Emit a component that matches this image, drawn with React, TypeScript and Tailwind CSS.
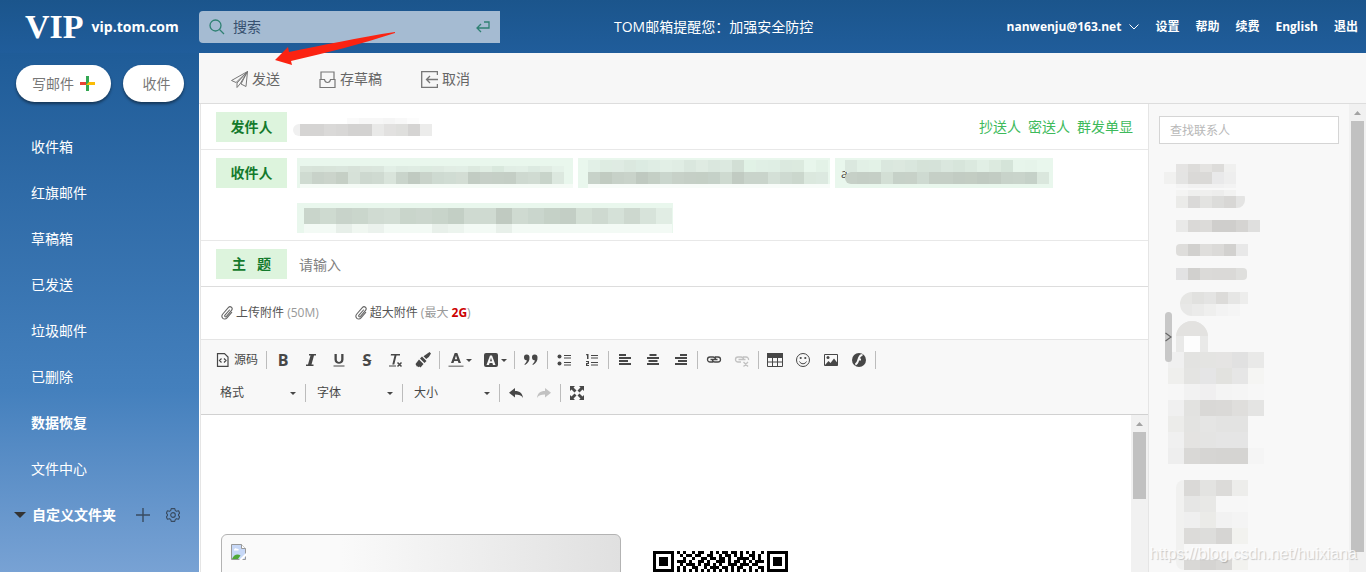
import type { ReactNode } from "react"
import clsx from "clsx"

const folders = [
  { name: "收件箱", bold: false },
  { name: "红旗邮件", bold: false },
  { name: "草稿箱", bold: false },
  { name: "已发送", bold: false },
  { name: "垃圾邮件", bold: false },
  { name: "已删除", bold: false },
  { name: "数据恢复", bold: true },
  { name: "文件中心", bold: false },
]

const accountLinks = ["设置", "帮助", "续费", "English", "退出"]

interface StripProps {
  cells: string;
  className?: string;
  cell?: string;
}

// A row of flat colour cells, "-" leaves a cell empty
function Strip({ cells, className, cell = "w-3" }: StripProps) {
  return (
    <div className={clsx("flex", className)}>
      {cells.split(" ").map((c, i) => (
        <span key={i} className={clsx("h-full shrink-0", cell)} style={{ backgroundColor: c === "-" ? "transparent" : `#${c}` }} />
      ))}
    </div>
  )
}

function Header() {
  return (
    <header className="flex h-[53px] shrink-0 items-center bg-linear-to-b from-[#1b558c] to-[#205d9b] text-white">
      <a href="#" className="flex w-[199px] shrink-0 items-center gap-2 pl-[25px]">
        <span className="font-['Liberation_Serif',serif] text-[34px] leading-[52px] font-bold">VIP</span>
        <span className="text-sm leading-5 font-bold">vip.tom.com</span>
      </a>
      <label className="flex h-8 w-[301px] shrink-0 items-center rounded-l-[4px] bg-[#a5bbd2] px-[10px]">
        <svg className="h-4 w-4 shrink-0" viewBox="0 0 16 16" fill="none" stroke="#2f8173" strokeWidth="1.3">
          <circle cx="6.5" cy="6.5" r="5.5" />
          <path d="M10.5 10.5 15 15" />
        </svg>
        <input
          aria-label="搜索"
          placeholder="搜索"
          className="ml-2 min-w-0 flex-1 bg-transparent text-sm leading-5 outline-none placeholder:text-[#37506f]"
        />
        <svg className="h-3 w-[14px] shrink-0" viewBox="0 0 14 12" fill="none" stroke="#2f8173" strokeWidth="1.3">
          <path d="M8 1h5v6H1M5 3 1 7l4 4" />
        </svg>
      </label>
      <p className="flex-1 pl-[114px] text-sm leading-5 whitespace-nowrap">TOM邮箱提醒您：加强安全防控</p>
      <nav className="flex items-center gap-4 pr-2 text-xs leading-5 font-bold whitespace-nowrap">
        <button className="flex items-center gap-2">
          nanwenju@163.net
          <svg className="h-[6px] w-[10px]" viewBox="0 0 10 6" fill="none" stroke="white">
            <path d="m.5.5 4.500 4.500L9.500.5" />
          </svg>
        </button>
        {accountLinks.map((name) => (
          <a key={name} href="#">{name}</a>
        ))}
      </nav>
    </header>
  )
}

function Sidebar() {
  return (
    <aside className="w-[199px] shrink-0 bg-linear-to-b from-[#1f5c98] from-0% via-[#4480bd] via-65% to-[#78a2d4] text-sm leading-5 text-white">
      <div className="flex gap-3 pt-3 pl-4 text-[#777]">
        <button className="flex h-[37px] w-[95px] items-center gap-[6px] rounded-full bg-white pl-4 shadow-[0_2px_3px_rgba(0,0,0,0.45)]">
          写邮件
          <svg className="h-[15px] w-[15px]" viewBox="0 0 15 15">
            <path d="M6 0h3v15H6z" fill="#34a853" />
            <path d="M0 6h6v3H0z" fill="#ea4335" />
            <path d="M6 9 9 6h6v3z" fill="#fbbc05" />
          </svg>
        </button>
        <button className="h-[37px] w-[61px] rounded-full bg-white pl-[6px] shadow-[0_2px_3px_rgba(0,0,0,0.45)]">收件</button>
      </div>
      <ul className="mt-[22px]">
        {folders.map((f) => (
          <li key={f.name}>
            <a href="#" className={clsx("flex h-[46px] items-center pl-[31px]", f.bold && "font-bold")}>{f.name}</a>
          </li>
        ))}
      </ul>
      <div className="flex h-[46px] items-center pl-[14px]">
        <button className="flex items-center gap-[6px] font-bold">
          <svg className="h-[6px] w-3" viewBox="0 0 12 6"><path d="M0 0h12L6 6z" fill="#333" /></svg>
          自定义文件夹
        </button>
        <button aria-label="新建文件夹" className="ml-5">
          <svg className="h-[14px] w-[14px]" viewBox="0 0 14 14" stroke="#394b60" strokeWidth="1.400"><path d="M7 0v14M0 7h14" /></svg>
        </button>
        <button aria-label="文件夹设置" className="ml-4">
          <svg className="h-[14px] w-[14px]" viewBox="0 0 24 24" fill="none" stroke="#394b60" strokeWidth="1.900" strokeLinejoin="round">
            <path d="M9 1h6l1 3.500 2 1.200 3.500-.9L23.500 9l-2 2v2l2 2-2 4.200-3.500-.9-2 1.200L15 23H9l-1-3.500-2-1.200-3.500.9L.5 15l2-2v-2l-2-2 2-4.200 3.500.9 2-1.200z" />
            <circle cx="12" cy="12" r="4" />
          </svg>
        </button>
      </div>
    </aside>
  )
}

function ActionBar() {
  return (
    <div className="flex h-[51px] shrink-0 items-center gap-[39px] border-b border-[#ddd] bg-[#f7f7f7] pt-[2px] pl-8 text-sm leading-5 text-[#666]">
      <button className="flex items-center gap-1">
        <svg className="h-[17px] w-[17px]" viewBox="0 0 17 17" fill="none" stroke="#777" strokeLinejoin="round">
          <path d="M16.500.5.5 9.500l4.500 2zM16.500.5 15 15.500l-5-2.500zM16.500.5 6 12v4.500l3-3.500L16.500.5" />
        </svg>
        发送
      </button>
      <button className="flex items-center gap-1">
        <svg className="h-[17px] w-[17px]" viewBox="0 0 17 17" fill="none" stroke="#777" strokeWidth="1.200">
          <path d="M2 8V1h13v7M1 8.500v8h15v-8h-4.500c-.3 2-1.300 3-3 3s-2.700-1-3-3z" />
        </svg>
        存草稿
      </button>
      <button className="flex items-center gap-1">
        <svg className="h-[17px] w-[17px]" viewBox="0 0 17 17" fill="none" stroke="#777" strokeWidth="1.300">
          <path d="M16.400 4V.7H.7v15.700h15.700V13M17 8.500H5.500M9 5 5.500 8.500 9 12" />
        </svg>
        取消
      </button>
    </div>
  )
}

function FieldLabel({ children }: { children: ReactNode }) {
  return (
    <span className="flex h-[30px] w-[71px] shrink-0 items-center justify-center bg-[#ddf4dd] text-sm leading-5 font-bold whitespace-pre text-[#147a2c]">
      {children}
    </span>
  )
}

function Fields() {
  return (
    <div className="shrink-0">
      <div className="flex h-[46px] items-start border-b border-[#e8e8e8] px-[15px] pt-2">
        <FieldLabel>发件人</FieldLabel>
        <div className="ml-[6px] pt-[6px]">
          <Strip className="h-[6px] pl-[54px]" cells="fafafa f7f7f7 f7f7f7 f5f5f5 f8f8f8 fcfcfc" />
          <div className="flex">
            <span className="h-3 w-[7px] rounded-l-full bg-[#f0f0f0]" />
            <Strip className="h-3" cells="d5d4d3 d5d4d3 dad9d8 d8d7d6 d3d2d1 d3d2d1 e9e9e8 e2e1e0 dfdfdd d5d4d3 ececeb" />
          </div>
        </div>
        <div className="ml-auto flex gap-[7px] pt-[5px] text-sm leading-5 text-[#3dba5b]">
          <button>抄送人</button>
          <button>密送人</button>
          <button>群发单显</button>
        </div>
      </div>

      <div className="flex min-h-[91px] items-start border-b border-[#e8e8e8] px-[15px] pt-2 pb-[7px]">
        <FieldLabel>收件人</FieldLabel>
        <div className="ml-[10px] flex flex-wrap gap-x-[5px] gap-y-[15px]">
          <div className="h-[30px] w-[276px] overflow-hidden bg-[#e9f7ed] pt-2 pl-[3px]">
            <Strip className="h-[6px]" cells="d8e4da d7e3d9 d8e4da d9e5dc d7e2d9 dae5dc dae6dd e2efe6 deebe2 dfece3 dcebe0 deeae1 e1ede4 e1eee5 dce9df e0ede3 d9e8dd e1eee5 e2efe6 dceae1 e0ece3 e5f2e9" />
            <Strip className="h-3" cells="cfdbd1 c8d2c9 cbd4cb c5cfc5 d6e1d8 cdd8cf cfdad1 d9e4db c9d4cb c0cac1 c9d3ca cedad1 d0dcd3 d3ddd4 c2ccc3 c6cfc7 c5cfc6 c4cec5 ced9d0 d0dbd2 c8d4ca dce8df" />
            <div className="h-1 bg-[#f5fbf6]" />
          </div>
          <div className="h-[30px] w-[252px] overflow-hidden bg-[#e9f7ed] pt-[2px] pl-[10px]">
            <Strip className="h-3" cells="e2f0e7 deece2 dfebe3 dbe8df dcebe2 dfede4 e2efe6 e0ede4 dae7de dfebe2 dae7de dce9e0 d2dfd5 e1f2e6 e0efe5 dfeee4 dbe9df dceadf e8f6ec e3f2e7" />
            <Strip className="h-3" cells="c7d2c9 c1cbc1 c7d1c8 c9d3ca bfc9c0 c4cfc5 cad6cd c7d1c8 c5cfc6 c4cfc5 c5d1c8 cedad0 c1cbc2 c9d4cb c9d4cb d4e0d7 cedad1 cbd7cd dbe8de dce9e0" />
            <div className="h-1 bg-[#f8fcf9]" />
          </div>
          <div className="flex h-[30px] w-[218px] overflow-hidden bg-[#e9f7ed] pt-[2px]">
            <span className="mt-[6px] w-[10px] pl-[6px] text-xs leading-4 text-[#444]">a</span>
            <div>
              <Strip className="h-3" cells="dbe8df e2f0e6 e3f2e7 dae7de dce8df d9e6dd d5e2d8 d5e2d9 dae7de d7e5db dbe9df e1efe5 dceadf d5e4d9 e7f5eb e6f4ea" />
              <Strip className="h-3 overflow-hidden rounded-l-md" cells="c6d0c7 c4cec5 c5cfc6 d3dfd5 c6d1c8 c7d1c8 cedad1 c5cfc6 c5cfc6 c2ccc3 c3cdc3 c0cac1 c2ccc3 c8d3ca c9d4cb c5d1c8 dae7dd" />
            </div>
          </div>
          <div className="h-[30px] w-[376px] overflow-hidden bg-[#e9f7ed] pt-[5px] pl-[7px]">
            <Strip className="h-4" cell="w-4" cells="c9d5cb cedad0 c8d3ca cad6cc d0dbd2 d2ddd4 c9d5cb cbd6cd c8d4ca c3cfc5 cfdad1 cfdad1 c0cac1 cfdad1 cad6cd c5d1c7 c3cec5 d3dfd5 ced9d0 d5e1d8 cdd8cf d7e3da e1ede4" />
            <Strip className="h-4" cell="w-4" cells="f3faf5 f3faf5 e7efe9 f0f7f1 ebf2ed f3faf5 f3faf5 f3faf5 e8f0ea ecf4ee f3faf5 f3faf5 e8f0ea f3faf5 f3faf5 f3faf5 f3faf5 f3faf5 f3faf5 f3faf5 f3faf5 f3faf5 f3faf5" />
          </div>
        </div>
      </div>

      <label className="flex h-[46px] items-start border-b border-[#ddd] px-[15px] pt-2">
        <FieldLabel>{"主   题"}</FieldLabel>
        <input
          placeholder="请输入"
          className="ml-3 h-[30px] min-w-0 flex-1 bg-transparent text-sm leading-5 outline-none placeholder:text-[#808080]"
        />
      </label>
    </div>
  )
}

function PaperClip() {
  return (
    <svg className="h-[14px] w-3" viewBox="0 0 12 14" fill="none" stroke="#666" strokeWidth="1.100" strokeLinecap="round">
      <path d="M8.500 4 4 9.200c-.9 1.100.5 2.300 1.500 1.200l5-6c2-2.500-1.200-5-3.200-2.700L1.800 8C-.8 11.300 3.200 15 6 11.800l4.700-5.500" />
    </svg>
  )
}

function Attachments() {
  return (
    <div className="flex h-[53px] shrink-0 items-center gap-9 border-b border-[#e5e5e5] pl-5 text-xs leading-5">
      <button className="flex items-center gap-[3px] text-[#555]">
        <PaperClip />
        <span>上传附件 <span className="text-[#999]">(50M)</span></span>
      </button>
      <button className="flex items-center gap-[3px] text-[#555]">
        <PaperClip />
        <span>超大附件 <span className="text-[#999]">(最大 <b className="text-[#c00]">2G</b>)</span></span>
      </button>
    </div>
  )
}

interface ToolProps {
  label: string;
  children: ReactNode;
  off?: boolean;
}

function Tool({ label, children, off }: ToolProps) {
  return (
    <button aria-label={label} disabled={off} className={clsx("flex h-7 w-7 items-center justify-center text-[#474747]", off && "opacity-30")}>
      <svg className="h-4 w-4" viewBox="0 0 16 16" fill="currentColor">{children}</svg>
    </button>
  )
}

function LetterTool({ label, children }: ToolProps) {
  return (
    <button aria-label={label} className="h-7 w-7 text-base leading-7 font-bold text-[#474747]">{children}</button>
  )
}

function ColorTool({ label, children }: ToolProps) {
  return (
    <button aria-label={label} className="flex h-7 w-[35px] items-center gap-[2px] pl-[6px] text-[#474747]">
      <svg className="h-4 w-4" viewBox="0 0 16 16" fill="currentColor">{children}</svg>
      <Caret />
    </button>
  )
}

function Caret() {
  return <svg className="h-[3px] w-[6px]" viewBox="0 0 6 3"><path d="M0 0h6L3 3z" fill="#474747" /></svg>
}

function Sep() {
  return <span className="mx-[2px] h-[18px] w-px bg-[#bcbcbc]" />
}

function Combo({ name }: { name: string }) {
  return (
    <label className="relative flex h-7 w-[92px] items-center">
      <select aria-label={name} className="h-full w-full appearance-none bg-transparent pl-[9px] text-xs text-[#474747] outline-none">
        <option>{name}</option>
      </select>
      <span className="pointer-events-none absolute right-[7px]"><Caret /></span>
    </label>
  )
}

function EditorToolbar() {
  const line = { fill: "none", stroke: "currentColor" }
  return (
    <div className="h-[75px] shrink-0 border-b border-[#d1d1d1] bg-[#f8f8f8] pt-[6px] pl-2">
      <div className="flex items-center">
        <button className="flex h-7 w-[55px] items-center gap-1 pl-[7px] text-xs leading-5 whitespace-nowrap text-[#474747]">
          <svg className="h-[14px] w-[14px] shrink-0" viewBox="0 0 14 14" {...line} strokeWidth="1.200">
            <path d="M1.500.6h7l3.500 3.500v9.300H1.500zM5.500 5.500 3.500 7.500l2 2M8 5.500l2 2-2 2" />
          </svg>
          源码
        </button>
        <Sep />
        <LetterTool label="粗体">B</LetterTool>
        <Tool label="斜体"><path d="M6 2h7v1.500h-2L8.500 12.500h2V14H3v-1.500h2L7.500 3.500H6z" /></Tool>
        <Tool label="下划线">
          <path d="M3.500 2h2.300v5.500c0 3.300 4.400 3.300 4.400 0V2h2.300v5.500c0 5.800-9 5.800-9 0zM2.500 13.500h11v1h-11z" />
        </Tool>
        <LetterTool label="删除线"><s>S</s></LetterTool>
        <Tool label="清除格式">
          <path d="M4 2h9v1.500H9.500L7.300 12.500h-2L7.500 3.500H3.700zM2 13.500h7v1H2z" />
          <path d="m10.500 10.500 4 4m0-4-4 4" {...line} strokeWidth="1.500" />
        </Tool>
        <Tool label="复制格式">
          <path d="M14.500 0 16 1.500 13.800 5l-2.600 2-2.700-2.700L11 2.500zM7 4.500 11.500 9 9.500 11 5 6.500zM4 7.500 8.500 12 5.500 15.500l-1-1-.8.800-1-1-.7.500L.5 12z" />
        </Tool>
        <Sep />
        <ColorTool label="文本颜色">
          <path fillRule="evenodd" d="M6.700 1h2.600L13 11h-2.500l-.7-2H6.200l-.7 2H3zM8 3.500 6.800 7.300h2.400z" />
          <path d="M.5 13.500h15V15H.5z" opacity=".6" />
        </ColorTool>
        <ColorTool label="背景颜色">
          <path fillRule="evenodd" d="M3 1h10a2 2 0 0 1 2 2v10a2 2 0 0 1-2 2H3a2 2 0 0 1-2-2V3a2 2 0 0 1 2-2zm4 2.500L3.500 13H6l.6-2h2.800l.6 2h2.500L9 3.500zm1 2.300 1 3.400H7z" />
        </ColorTool>
        <Sep />
        <Tool label="引用">
          <path d="M1 5.500a2.700 2.700 0 1 1 5.500-.3c.3 3.500-1.500 6-4.500 7.800l-.6-.8C3 11 3.700 9.700 3.800 8.200 2 8.500 1 7 1 5.500zM9 5.500a2.700 2.700 0 1 1 5.500-.3c.3 3.500-1.500 6-4.500 7.800l-.6-.8c1.600-1.200 2.300-2.500 2.400-4C10 8.500 9 7 9 5.500z" />
        </Tool>
        <Sep />
        <Tool label="项目列表">
          <circle cx="3.500" cy="4.500" r="2" /><circle cx="3.500" cy="11.500" r="2" />
          <path d="M8 3h7v1H8zM8 5.500h7v1H8zM8 10h7v1H8zM8 12.500h7v1H8z" />
        </Tool>
        <Tool label="编号列表">
          <path d="M3 2h1.500v5H3V3.300H2V2.200zM2 9h3v3H3.300v1H5v1H2v-3h1.800v-1H2zM7 3h7v1H7zM7 5.500h7v1H7zM7 10h7v1H7zM7 12.500h7v1H7z" />
        </Tool>
        <Sep />
        <Tool label="左对齐"><path d="M2 2h7v2H2zM2 5h12v2H2zM2 8h9v2H2zM2 11h12v2H2z" /></Tool>
        <Tool label="居中"><path d="M4.500 2h7v2h-7zM2 5h12v2H2zM3.500 8h9v2h-9zM2 11h12v2H2z" /></Tool>
        <Tool label="右对齐"><path d="M7 2h7v2H7zM2 5h12v2H2zM5 8h9v2H5zM2 11h12v2H2z" /></Tool>
        <Sep />
        <Tool label="插入链接">
          <path d="M7 10H4a2.500 2.500 0 0 1 0-5h3a2.500 2.500 0 0 1 2.500 2.500M9 5h3a2.500 2.500 0 0 1 0 5H9a2.500 2.500 0 0 1-2.500-2.500M4.500 7.500h7" {...line} strokeWidth="1.300" />
        </Tool>
        <Tool label="取消链接" off>
          <path d="M7 10H4a2.500 2.500 0 0 1 0-5h3a2.500 2.500 0 0 1 2.500 2.500M9 5h3a2.500 2.500 0 0 1 2.500 3M4.500 7.500h7M9.500 10l4.500 4.500M14 10l-4.500 4.500" {...line} strokeWidth="1.300" />
        </Tool>
        <Sep />
        <Tool label="表格">
          <path d="M.5 1.500h15v13H.5zM.5 5.500h15M.5 10h15M5.500 5v9M10.500 5v9" {...line} />
          <path d="M0 1h16v4H0z" />
        </Tool>
        <Tool label="表情">
          <circle cx="8" cy="8" r="6.500" {...line} />
          <circle cx="5.700" cy="6" r="1.100" /><circle cx="10.300" cy="6" r="1.100" />
          <path d="M4.500 9.500c1.500 3 5.500 3 7 0" {...line} />
        </Tool>
        <Tool label="图片">
          <path d="M1.500 2.500h13v11h-13z" {...line} />
          <circle cx="5" cy="5.500" r="1.500" />
          <path d="m2 13 3.500-4L7.500 11 11 6.500l3.500 4.500v2.500H2z" />
        </Tool>
        <Tool label="Flash">
          <circle cx="8" cy="8" r="7" />
          <path d="M11.500 3c-3 0-3.500 2.500-4.200 5-.6 2.300-1.300 4-3 4.500M7 7.500h3" fill="none" stroke="#f8f8f8" strokeWidth="1.900" />
        </Tool>
        <Sep />
      </div>
      <div className="mt-[5px] ml-[2px] flex items-center">
        <Combo name="格式" />
        <Sep />
        <Combo name="字体" />
        <Sep />
        <Combo name="大小" />
        <Sep />
        <Tool label="撤消"><path d="M7 3v3c5 0 7.500 2.500 8 7-1.500-2.700-4-3.500-8-3.500v3L1 7.700z" /></Tool>
        <Tool label="重做" off><path d="M9 3v3c-5 0-7.500 2.500-8 7 1.500-2.700 4-3.500 8-3.500v3l6-4.800z" /></Tool>
        <Sep />
        <Tool label="全屏">
          <path d="M1 1h5L4.500 2.500l3 3-2 2-3-3L1 6zM15 1v5l-1.500-1.500-3 3-2-2 3-3L10 1zM1 15v-5l1.500 1.500 3-3 2 2-3 3L6 15zM15 15h-5l1.500-1.500-3-3 2-2 3 3L15 10z" />
        </Tool>
      </div>
    </div>
  )
}

const qrRows = [
  "111111101010010110010101101101010100101111111",
  "100000100101101100110010110101001101001000001",
  "101110100010010011011011010011110101001011101",
  "101110101110100110100111010110101011101011101",
  "101110100101110101101010011101110110001011101",
  "100000101010011001011101101011001001101000001",
  "111111101010101010101010101010101010101111111",
  "000000001101001011010111010010110110100000000",
]

function QrCode() {
  return (
    <svg className="h-[135px] w-[135px]" viewBox="0 0 45 45" shapeRendering="crispEdges">
      {qrRows.map((row, y) =>
        row.split("").map((bit, x) => bit === "1" && <path key={`${x}-${y}`} d={`M${x} ${y}h1v1h-1z`} />)
      )}
    </svg>
  )
}

function BrokenImage() {
  return (
    <svg className="h-4 w-4" viewBox="0 0 16 16">
      <path d="M.5.5h10l4 4v11H.5z" fill="#c7d8f7" stroke="#999" />
      <path d="M10.500.5v4h4" fill="#fff" stroke="#999" />
      <path d="M3 6c0-2 2.500-2.500 3-1 1.500-.5 2 .5 1.500 1.500H3z" fill="#fff" />
      <path d="M1 15c2-5 6-5.500 8.500-3.500L7 15z" fill="#4fa838" />
      <path d="m16 8-8 8h3l5-5z" fill="#fff" />
    </svg>
  )
}

interface ScrollbarProps {
  thumb: string;
}

function Scrollbar({ thumb }: ScrollbarProps) {
  return (
    <div className="flex w-[17px] shrink-0 flex-col items-center bg-[#f1f1f1]">
      <span className="flex h-[17px] shrink-0 items-center">
        <svg className="h-1 w-[7px]" viewBox="0 0 7 4"><path d="M3.500 0 7 4H0z" fill="#a3a3a3" /></svg>
      </span>
      <span className={clsx("w-[13px] bg-[#c1c1c1]", thumb)} />
    </div>
  )
}

function MessageBody() {
  return (
    <div className="flex min-h-0 flex-1">
      <div className="flex min-w-0 flex-1 gap-8 overflow-hidden pt-[119px] pl-5">
        <div className="h-[200px] w-[400px] shrink-0 rounded-[6px] border border-[#b3b3b3] bg-linear-to-r/srgb from-[#fafafa] from-30% to-[#e0e0e0] pt-[9px] pl-[9px]">
          <BrokenImage />
        </div>
        <div className="shrink-0 pt-[17px]"><QrCode /></div>
      </div>
      <Scrollbar thumb="h-[67px]" />
    </div>
  )
}

function Contacts() {
  return (
    <aside className="relative flex w-[218px] shrink-0 border-l border-[#e5e5e5] bg-[#f8f8f8]">
      <div className="min-w-0 flex-1 overflow-hidden pt-3 pl-[10px]">
        <input
          aria-label="查找联系人"
          placeholder="查找联系人"
          className="h-7 w-[180px] border border-[#d5d5d5] bg-white px-[10px] text-xs outline-none placeholder:text-[#b8b8b8]"
        />
        <div className="mt-5 ml-[5px]">
          <Strip className="h-2 pl-3" cells="e5e4e3 dddcda e4e3e1 dddcda f0f0ef" />
          <Strip className="h-3" cells="f1f1f0 e4e4e3 dad9d7 dad9d7 e9e9ea eeeeee" />
          <Strip className="h-1 pl-3" cells="f4f4f4 f1f1f1 f1f1f1 f1f1f1 f3f3f3" />
        </div>
        <div className="mt-[2px] ml-[17px] w-[69px] overflow-hidden rounded-r-lg">
          <Strip className="h-[6px]" cells="f4f4f3 efefee efefee ededec f2f2f1" />
          <Strip className="h-3" cells="ebebe9 dad9d8 e3e3e1 dcdcda d8d7d5 e4e4e3" />
        </div>
        <Strip className="mt-3 ml-[17px] h-3" cells="e9e9e8 dad9d7 dcdbd9 cfcecc cfcecc d5d4d2 dfdfde" />
        <Strip className="mt-3 ml-[17px] h-3 overflow-hidden rounded-l" cells="dedddb d1d0ce dfdedc dbdad8 d2d1cf e8e8e8" />
        <Strip className="mt-3 ml-[17px] h-3 w-[71px] overflow-hidden rounded-r" cells="e2e2e3 d1d0ce dbdad8 dad9d7 dad9d7 dfdfdd" />
        <div className="mt-3 ml-[21px] w-[68px] overflow-hidden rounded-l-xl">
          <Strip className="h-3" cells="e6e6e4 e1e1df e4e4e3 dcdbd9 e6e6e5 ededec" />
          <Strip className="h-3" cells="e8e8e7 ebebea efefee f3f3f3 f5f5f5" />
        </div>
        <div className="mt-[5px] ml-[17px] flex h-[31px] w-8 flex-col items-center overflow-hidden rounded-t-full bg-[#e9e9e8]">
          <span className="h-[15px] w-full bg-[#e3e2e0]" />
          <span className="h-4 w-4 bg-[#fdfdfd]" />
        </div>
        <div className="ml-[9px]">
          <Strip cell="w-4" className="h-4" cells="f0f0f0 e3e3e1 e4e4e2 e5e4e3 e1e1e1 e9e9e8" />
          <Strip cell="w-4" className="h-4" cells="efefed e4e4e2 e5e5e6 e2e2df e6e6e6 f5f5f3" />
          <Strip cell="w-4" className="h-4" cells="f7f7f7 f2f2f2 f0eff0 f4f4f4 f5f5f5 f7f7f7" />
          <Strip cell="w-4" className="h-4" cells="f0f0f0 e2e2e0 d9d8d6 dad9d7 dfdedc e4e4e3" />
          <Strip cell="w-4" className="h-4" cells="ececea e3e3e1 e5e5e4 e3e3e2 e3e3e2" />
          <Strip cell="w-4" className="h-4" cells="f0f0f0 e4e3e1 e4e4e3 e5e5e5 e5e5e5" />
          <Strip cell="w-4" className="h-4" cells="eeeeee d9d8d6 d6d5d3 d5d4d2 d5d4d2 f5f5f5" />
        </div>
        <div className="mt-4 ml-[17px] w-[72px] overflow-hidden rounded-l-lg bg-[#f1f1f0] pl-2">
          <Strip cell="w-4" className="h-4" cells="dad9d7 e3e3e1 dcdbd9 ededeb" />
          <Strip cell="w-4" className="h-4" cells="e6e6e5 e8e8e6 f7f7f7 f7f7f7" />
          <Strip cell="w-4" className="h-4" cells="efefef ebebe8 f2f2f2 f4f4f4" />
          <Strip cell="w-4" className="h-4" cells="dcdbd9 dddddb d6d5d3 f2f2ef" />
          <Strip cell="w-4" className="h-4" cells="f8f8f8 f8f8f8 f8f8f8 f8f8f8" />
          <Strip cell="w-4" className="h-[10px]" cells="d9d8d6 d5d4d2 d9d8d6 f2f2ef" />
        </div>
      </div>
      <Scrollbar thumb="h-[431px]" />
      <button aria-label="收起联系人" className="absolute top-[208px] left-4 flex h-[50px] w-[7px] items-center rounded bg-[#c8c8c8]">
        <svg className="h-[10px] w-[7px]" viewBox="0 0 7 10" fill="none" stroke="#666" strokeWidth="1.200"><path d="m.5 1 5.500 4L.5 9" /></svg>
      </button>
      <span className="pointer-events-none absolute right-[9px] bottom-[6px] font-['Liberation_Sans',sans-serif] text-base leading-6 whitespace-nowrap text-white/80 [text-shadow:1px_1px_1px_rgba(0,0,0,0.2)]">
        https://blog.csdn.net/huixiana
      </span>
    </aside>
  )
}

export default function App() {
  return (
    <div className="relative flex h-screen flex-col overflow-hidden font-['Open_Sans','Noto_Sans_CJK_SC',sans-serif]">
      <Header />
      <div className="flex min-h-0 flex-1">
        <Sidebar />
        <main className="flex min-w-0 flex-1 flex-col bg-white">
          <ActionBar />
          <div className="flex min-h-0 flex-1">
            <section className="ml-px flex min-w-0 flex-1 flex-col border-l border-[#e5e5e5]">
              <Fields />
              <Attachments />
              <EditorToolbar />
              <MessageBody />
            </section>
            <Contacts />
          </div>
        </main>
      </div>
      <svg className="pointer-events-none absolute top-[31px] left-[275px] h-[34px] w-[121px]" viewBox="0 0 121 34">
        <path d="M120 1C85 6 45 15 14 21l-1-5L0 29l17 5-1-4c35-8 70-17 104-28z" fill="#fb2312" />
      </svg>
    </div>
  )
}
